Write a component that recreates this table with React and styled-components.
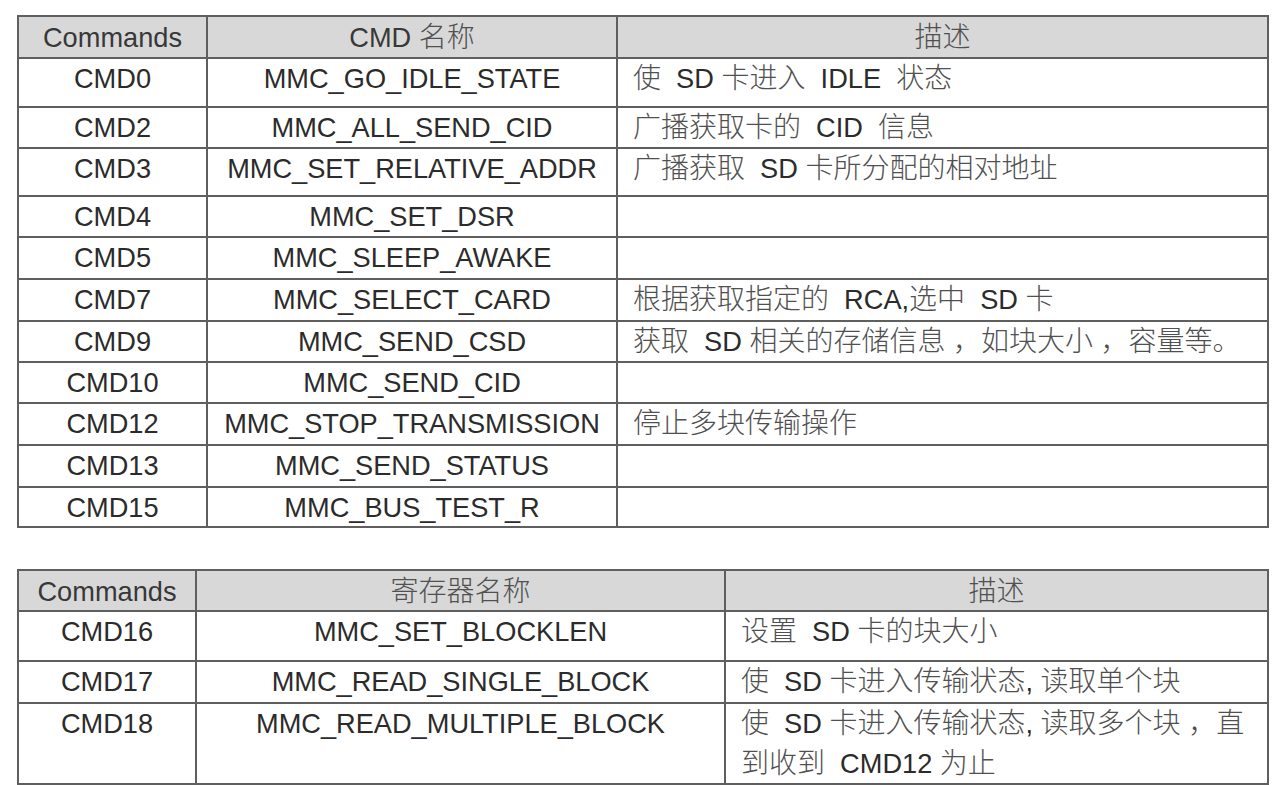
import React from "react";
import styled, { createGlobalStyle } from "styled-components";

const GlobalStyle = createGlobalStyle`
  html, body {
    margin: 0;
    padding: 0;
    background: #ffffff;
  }
  body {
    font-family: "Liberation Sans", Arial, "Noto Sans CJK SC", sans-serif;
    color: #2e2e2e;
  }
`;

const LINE = "#5f5f5f";

const FIRST = {
  cols: "187px 408px 649px",
  head: ["Commands", "CMD 名称", "描述"],
  headHeight: 40,
  rows: [
    ["CMD0", "MMC_GO_IDLE_STATE", "使  SD 卡进入  IDLE  状态", 47],
    ["CMD2", "MMC_ALL_SEND_CID", "广播获取卡的  CID  信息", 39],
    ["CMD3", "MMC_SET_RELATIVE_ADDR", "广播获取  SD 卡所分配的相对地址", 46],
    ["CMD4", "MMC_SET_DSR", "", 39],
    ["CMD5", "MMC_SLEEP_AWAKE", "", 40],
    ["CMD7", "MMC_SELECT_CARD", "根据获取指定的  RCA,选中  SD 卡", 40],
    ["CMD9", "MMC_SEND_CSD", "获取  SD 相关的存储信息 ，如块大小 ，容量等。", 39],
    ["CMD10", "MMC_SEND_CID", "", 39],
    ["CMD12", "MMC_STOP_TRANSMISSION", "停止多块传输操作", 40],
    ["CMD13", "MMC_SEND_STATUS", "", 40],
    ["CMD15", "MMC_BUS_TEST_R", "", 38],
  ],
};

const SECOND = {
  cols: "176px 527px 541px",
  head: ["Commands", "寄存器名称", "描述"],
  headHeight: 39,
  rows: [
    ["CMD16", "MMC_SET_BLOCKLEN", "设置  SD 卡的块大小", 48],
    ["CMD17", "MMC_READ_SINGLE_BLOCK", "使  SD 卡进入传输状态, 读取单个块", 40],
    [
      "CMD18",
      "MMC_READ_MULTIPLE_BLOCK",
      "使  SD 卡进入传输状态, 读取多个块 ，直\n到收到  CMD12 为止",
      79,
    ],
  ],
};

const HAN = /([\u3000-\u303f\u4e00-\u9fff\uff00-\uffef]+)/;

// split text into Latin and Han runs so the Han glyphs get their own size
const splitHan = (text) =>
  text
    .split(HAN)
    .filter(Boolean)
    .map((part, i) =>
      HAN.test(part) ? <Han key={i}>{part}</Han> : <span key={i}>{part}</span>
    );

const Table = ({ data }) => (
  <Grid>
    <Row $cols={data.cols} $h={data.headHeight}>
      {data.head.map((h, i) => (
        <HeadCell key={i}>{splitHan(h)}</HeadCell>
      ))}
    </Row>
    {data.rows.map(([cmd, name, desc, h]) => (
      <Row key={cmd} $cols={data.cols} $h={h}>
        <Cell>{cmd}</Cell>
        <Cell>{name}</Cell>
        <Cell $left>{splitHan(desc)}</Cell>
      </Row>
    ))}
  </Grid>
);

export default function App() {
  return (
    <>
      <GlobalStyle />
      <Page>
        <Table data={FIRST} />
        <Table data={SECOND} />
      </Page>
    </>
  );
}

const Page = styled.div`
  display: flex;
  flex-direction: column;
  gap: 41px;
  padding: 15px 0 0 17px;
`;

const Grid = styled.div`
  display: flex;
  flex-direction: column;
  gap: 2px;
  padding: 2px;
  width: max-content;
  background: ${LINE};
`;

const Row = styled.div`
  display: grid;
  grid-template-columns: ${(p) => p.$cols};
  grid-template-rows: ${(p) => p.$h}px;
  gap: 2px;
`;

const Cell = styled.div`
  background: #ffffff;
  font-size: 27.2px;
  line-height: 40px;
  text-align: ${(p) => (p.$left ? "left" : "center")};
  padding: ${(p) => (p.$left ? "0 6px 0 15px" : "0")};
  white-space: pre-wrap;
  color: #2b2b2b;
  min-height: 0;
`;

const HeadCell = styled(Cell)`
  background: #d8d8d8;
  text-align: center;
  line-height: 42px;
  color: #383838;
`;

const Han = styled.span`
  font-family: "Noto Sans CJK SC", sans-serif;
  font-size: 28px;
  font-weight: 300;
  line-height: 1;
  color: #505050;
`;
